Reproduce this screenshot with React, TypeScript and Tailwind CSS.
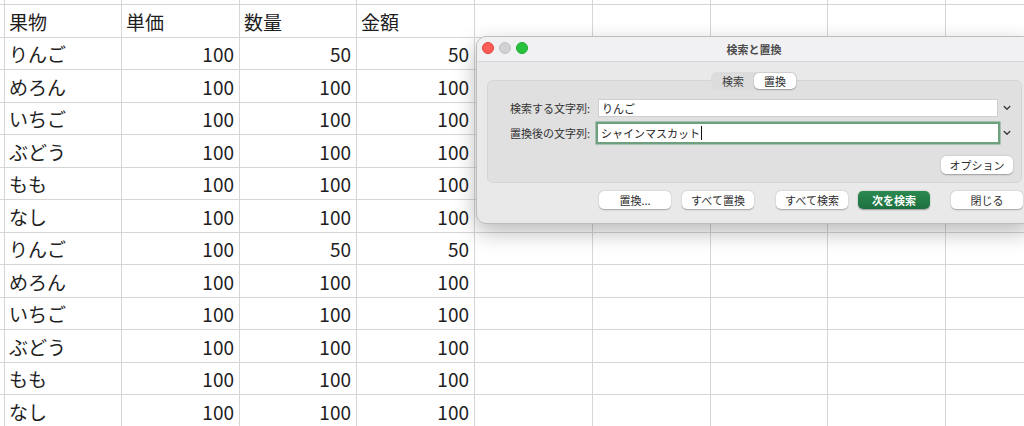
import React from "react";

const COLS = [117, 118, 117, 118, 118, 118, 117, 118, 118];
const colClass = (i: number) => (i % 2 === 0 ? (i === 6 ? "w-[117px]" : i === 0 || i === 2 ? "w-[117px]" : "w-[118px]") : "w-[118px]");

type Row = [string, string, string, string];
const rows: Row[] = [
  ["りんご", "100", "50", "50"],
  ["めろん", "100", "100", "100"],
  ["いちご", "100", "100", "100"],
  ["ぶどう", "100", "100", "100"],
  ["もも", "100", "100", "100"],
  ["なし", "100", "100", "100"],
  ["りんご", "100", "50", "50"],
  ["めろん", "100", "100", "100"],
  ["いちご", "100", "100", "100"],
  ["ぶどう", "100", "100", "100"],
  ["もも", "100", "100", "100"],
  ["なし", "100", "100", "100"],
];

function GridRow({ cells, h, header }: { cells: string[]; h: string; header?: boolean }) {
  return (
    <div className={`flex ${h} border-t border-[#d6d6d6]`}>
      <div className="w-[4px] shrink-0" />
      {COLS.map((_, i) => {
        const text = cells[i] ?? "";
        const right = !header && i > 0 && i < 4;
        return (
          <div
            key={i}
            className={`${colClass(i)} shrink-0 border-l border-[#d6d6d6] flex items-center ${
              right ? "justify-end pr-[5px]" : "justify-start pl-[4px]"
            } text-[19px] text-[#1e1e1e] leading-none`}
          >
            {text}
          </div>
        );
      })}
    </div>
  );
}

function Btn({ children, className = "" }: { children: React.ReactNode; className?: string }) {
  return (
    <div
      className={`h-[18px] w-[72px] rounded-[5px] bg-white shadow-[0_0.5px_1.5px_rgba(0,0,0,0.3)] flex items-center justify-center text-[11px] text-[#2e2e2e] leading-none ${className}`}
    >
      {children}
    </div>
  );
}

function Chevron() {
  return (
    <svg width="8" height="6" viewBox="0 0 8 6" className="ml-[5px]">
      <path d="M1.2 1.6 L4 4.2 L6.8 1.6" fill="none" stroke="#3a3a3a" strokeWidth="1.4" strokeLinecap="round" strokeLinejoin="round" />
    </svg>
  );
}

export default function App() {
  return (
    <div
      className="relative w-[1024px] h-[426px] overflow-hidden bg-white"
      style={{ fontFamily: '"Noto Sans CJK JP", "Noto Sans", sans-serif' }}
    >
      {/* spreadsheet */}
      <div className="flex flex-col">
        <div className="flex h-[4px]">
          <div className="w-[4px] shrink-0" />
          {COLS.map((_, i) => (
            <div key={i} className={`${colClass(i)} shrink-0 border-l border-[#d6d6d6]`} />
          ))}
        </div>
        <GridRow cells={["果物", "単価", "数量", "金額"]} h="h-[33px]" header />
        {rows.map((r, i) => (
          <GridRow key={i} cells={r} h={i % 2 === 0 ? "h-[32px]" : "h-[33px]"} />
        ))}
      </div>

      {/* dialog window */}
      <div className="absolute left-[476px] top-[36px] w-[556px] h-[188px] rounded-[10px] bg-[#e9e9e9] border border-[#bdbdbd] shadow-[0_8px_22px_rgba(0,0,0,0.28)] overflow-hidden flex flex-col">
        <div className="relative h-[25px] shrink-0 bg-[#f1f0f2] border-b border-[#d6d6d6] flex items-center justify-center">
          <div className="absolute left-[5px] top-[5px] flex gap-[5px]">
            <div className="w-[12px] h-[12px] rounded-full bg-[#fd5d55] border border-[#e0443e]" />
            <div className="w-[12px] h-[12px] rounded-full bg-[#d1d0d3] border border-[#c2c1c4]" />
            <div className="w-[12px] h-[12px] rounded-full bg-[#29c23f] border border-[#1eaa33]" />
          </div>
          <span className="text-[11px] font-bold text-[#4b4b4b] leading-none">検索と置換</span>
        </div>

        <div className="flex flex-col pt-[10px]">
          <div className="relative z-10 flex justify-center">
            <div className="flex h-[18px] rounded-[6px] bg-[#dcdcdc] p-[1px] items-stretch">
              <div className="w-[42px] flex items-center justify-center text-[11px] text-[#3a3a3a] leading-none">検索</div>
              <div className="w-[42px] rounded-[5px] bg-white shadow-[0_0.5px_1.5px_rgba(0,0,0,0.3)] flex items-center justify-center text-[11px] text-[#2a2a2a] leading-none">
                置換
              </div>
            </div>
          </div>

          <div className="-mt-[10px] ml-[10px] w-[535px] h-[103px] rounded-[6px] bg-[#e0e0e0] border border-[#d5d5d5] flex flex-col pt-[18px]">
            <div className="flex items-center h-[18px]">
              <div className="w-[102px] text-right text-[11px] text-[#333] leading-none">検索する文字列:</div>
              <div className="ml-[8px] w-[400px] h-[18px] bg-white border border-[#cfcfcf] flex items-center pl-[3px] text-[11px] text-[#222] leading-none">
                りんご
              </div>
              <Chevron />
            </div>
            <div className="flex items-center h-[18px] mt-[7px]">
              <div className="w-[102px] text-right text-[11px] text-[#333] leading-none">置換後の文字列:</div>
              <div className="ml-[8px] w-[400px] h-[18px] bg-white ring-[2.5px] ring-[#6e9f7f] flex items-center pl-[3px] text-[11px] text-[#222] leading-none">
                シャインマスカット
                <span className="w-[1px] h-[14px] bg-[#111] ml-[1px]" />
              </div>
              <Chevron />
            </div>
            <div className="flex justify-end mt-[14px] pr-[8px]">
              <Btn>オプション</Btn>
            </div>
          </div>

          <div className="flex mt-[8px] ml-[122px]">
            <Btn>置換...</Btn>
            <Btn className="ml-[11px] w-[71px]">すべて置換</Btn>
            <Btn className="ml-[22px]">すべて検索</Btn>
            <div className="ml-[10px] h-[18px] w-[72px] rounded-[5px] bg-gradient-to-b from-[#2b8a50] to-[#1d703f] shadow-[0_0.5px_1.5px_rgba(0,0,0,0.35)] flex items-center justify-center text-[11px] font-bold text-white leading-none">
              次を検索
            </div>
            <Btn className="ml-[21px]">閉じる</Btn>
          </div>
        </div>
      </div>
    </div>
  );
}
